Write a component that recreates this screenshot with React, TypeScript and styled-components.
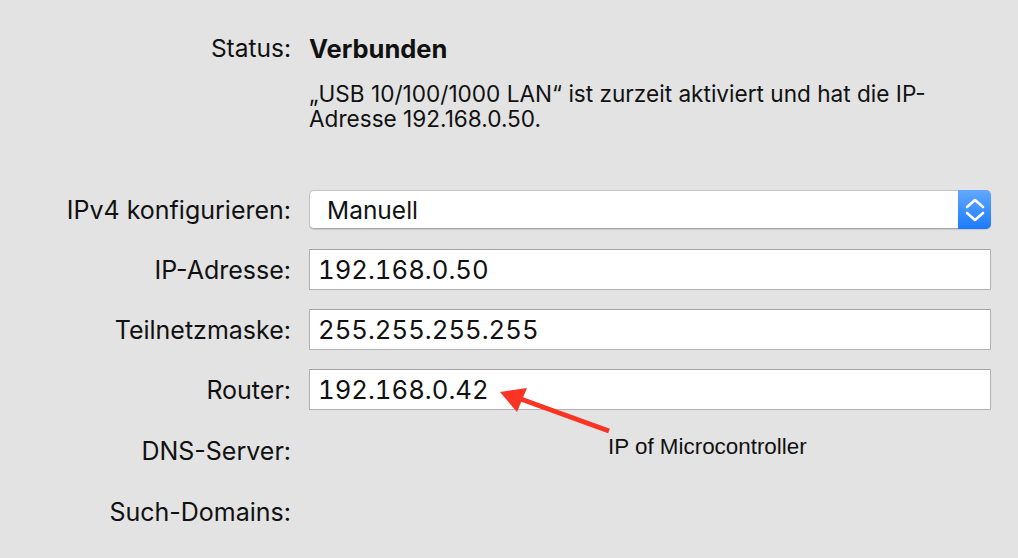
import React from 'react';
import styled, { createGlobalStyle } from 'styled-components';

const GlobalStyle = createGlobalStyle`
  html, body {
    margin: 0;
    padding: 0;
    background: #e3e3e3;
  }
  body {
    font-family: Inter, "Liberation Sans", Arial, sans-serif;
    color: #111111;
  }
`

const Page = styled.div`
  position: relative;
  width: 1018px;
  height: 558px;
  overflow: hidden;
  background: #e3e3e3;
  padding-top: 34px;
  box-sizing: border-box;
`

const Form = styled.div`
  display: flex;
  flex-direction: column;
`

const Row = styled.div<{ $top?: number; $height?: number }>`
  display: flex;
  align-items: center;
  height: ${p => (p.$height ? `${p.$height}px` : 'auto')};
  margin-top: ${p => p.$top ?? 0}px;
`

const Label = styled.div<{ $size?: number }>`
  width: 291px;
  flex: none;
  text-align: right;
  font-size: ${p => p.$size ?? 25}px;
  white-space: nowrap;
`

const Value = styled.div`
  margin-left: 18px;
  width: 682px;
  flex: none;
`

const StatusText = styled.div`
  font-size: 25.5px;
  font-weight: 700;
`

const Description = styled.div`
  font-size: 22.6px;
  line-height: 25px;
  white-space: nowrap;
`

const Popup = styled.div`
  position: relative;
  height: 39px;
  box-sizing: border-box;
  background: #ffffff;
  border: 1px solid #c4c4c4;
  border-bottom-color: #a9a9a9;
  border-radius: 5px;
  box-shadow: 0 1px 1px rgba(0, 0, 0, 0.12);
  display: flex;
  align-items: center;
  padding-left: 17px;
  font-size: 24.5px;
`

const Stepper = styled.div`
  position: absolute;
  top: -1px;
  right: -1px;
  bottom: -1px;
  width: 33px;
  border-radius: 0 5px 5px 0;
  background: linear-gradient(#62a8ff, #1b7bff);
  display: flex;
  align-items: center;
  justify-content: center;
`

const Field = styled.div`
  height: 41px;
  box-sizing: border-box;
  background: #ffffff;
  border: 1px solid #b2b2b2;
  border-top-color: #a4a4a4;
  display: flex;
  align-items: center;
  padding-left: 8px;
  font-size: 25.7px;
  font-variant-numeric: tabular-nums;
`

const Overlay = styled.svg`
  position: absolute;
  left: 0;
  top: 0;
  pointer-events: none;
`

const Note = styled.div`
  position: absolute;
  left: 608px;
  top: 436px;
  font-family: "Liberation Sans", Arial, sans-serif;
  font-size: 22.4px;
  line-height: 22px;
  color: #111111;
  white-space: nowrap;
`

function App() {
  return (
    <Page>
      <GlobalStyle />
      <Form>
        <Row $height={28}>
          <Label $size={24.5}>Status:</Label>
          <Value>
            <StatusText>Verbunden</StatusText>
          </Value>
        </Row>
        <Row $top={19}>
          <Label />
          <Value>
            <Description>
              „USB 10/100/1000 LAN“ ist zurzeit aktiviert und hat die IP-
              <br />
              Adresse 192.168.0.50.
            </Description>
          </Value>
        </Row>
        <Row $top={59} $height={39}>
          <Label>IPv4 konfigurieren:</Label>
          <Value>
            <Popup>
              Manuell
              <Stepper>
                <svg width="22" height="26" viewBox="0 0 22 26">
                  <path d="M3 10 L11 3 L19 10" fill="none" stroke="#fff" strokeWidth="2.6" strokeLinecap="round" strokeLinejoin="round" />
                  <path d="M3 16 L11 23 L19 16" fill="none" stroke="#fff" strokeWidth="2.6" strokeLinecap="round" strokeLinejoin="round" />
                </svg>
              </Stepper>
            </Popup>
          </Value>
        </Row>
        <Row $top={20} $height={41}>
          <Label>IP-Adresse:</Label>
          <Value>
            <Field>192.168.0.50</Field>
          </Value>
        </Row>
        <Row $top={19} $height={41}>
          <Label>Teilnetzmaske:</Label>
          <Value>
            <Field>255.255.255.255</Field>
          </Value>
        </Row>
        <Row $top={19} $height={41}>
          <Label>Router:</Label>
          <Value>
            <Field>192.168.0.42</Field>
          </Value>
        </Row>
        <Row $top={20} $height={41}>
          <Label>DNS-Server:</Label>
        </Row>
        <Row $top={20} $height={41}>
          <Label>Such-Domains:</Label>
        </Row>
      </Form>
      <Overlay width="1018" height="558" viewBox="0 0 1018 558">
        <line x1="609" y1="431" x2="518" y2="398" stroke="#fa3423" strokeWidth="5" />
        <polygon points="500,392 527,388 517,412" fill="#fa3423" />
      </Overlay>
      <Note>IP of Microcontroller</Note>
    </Page>
  );
}

export default App;
